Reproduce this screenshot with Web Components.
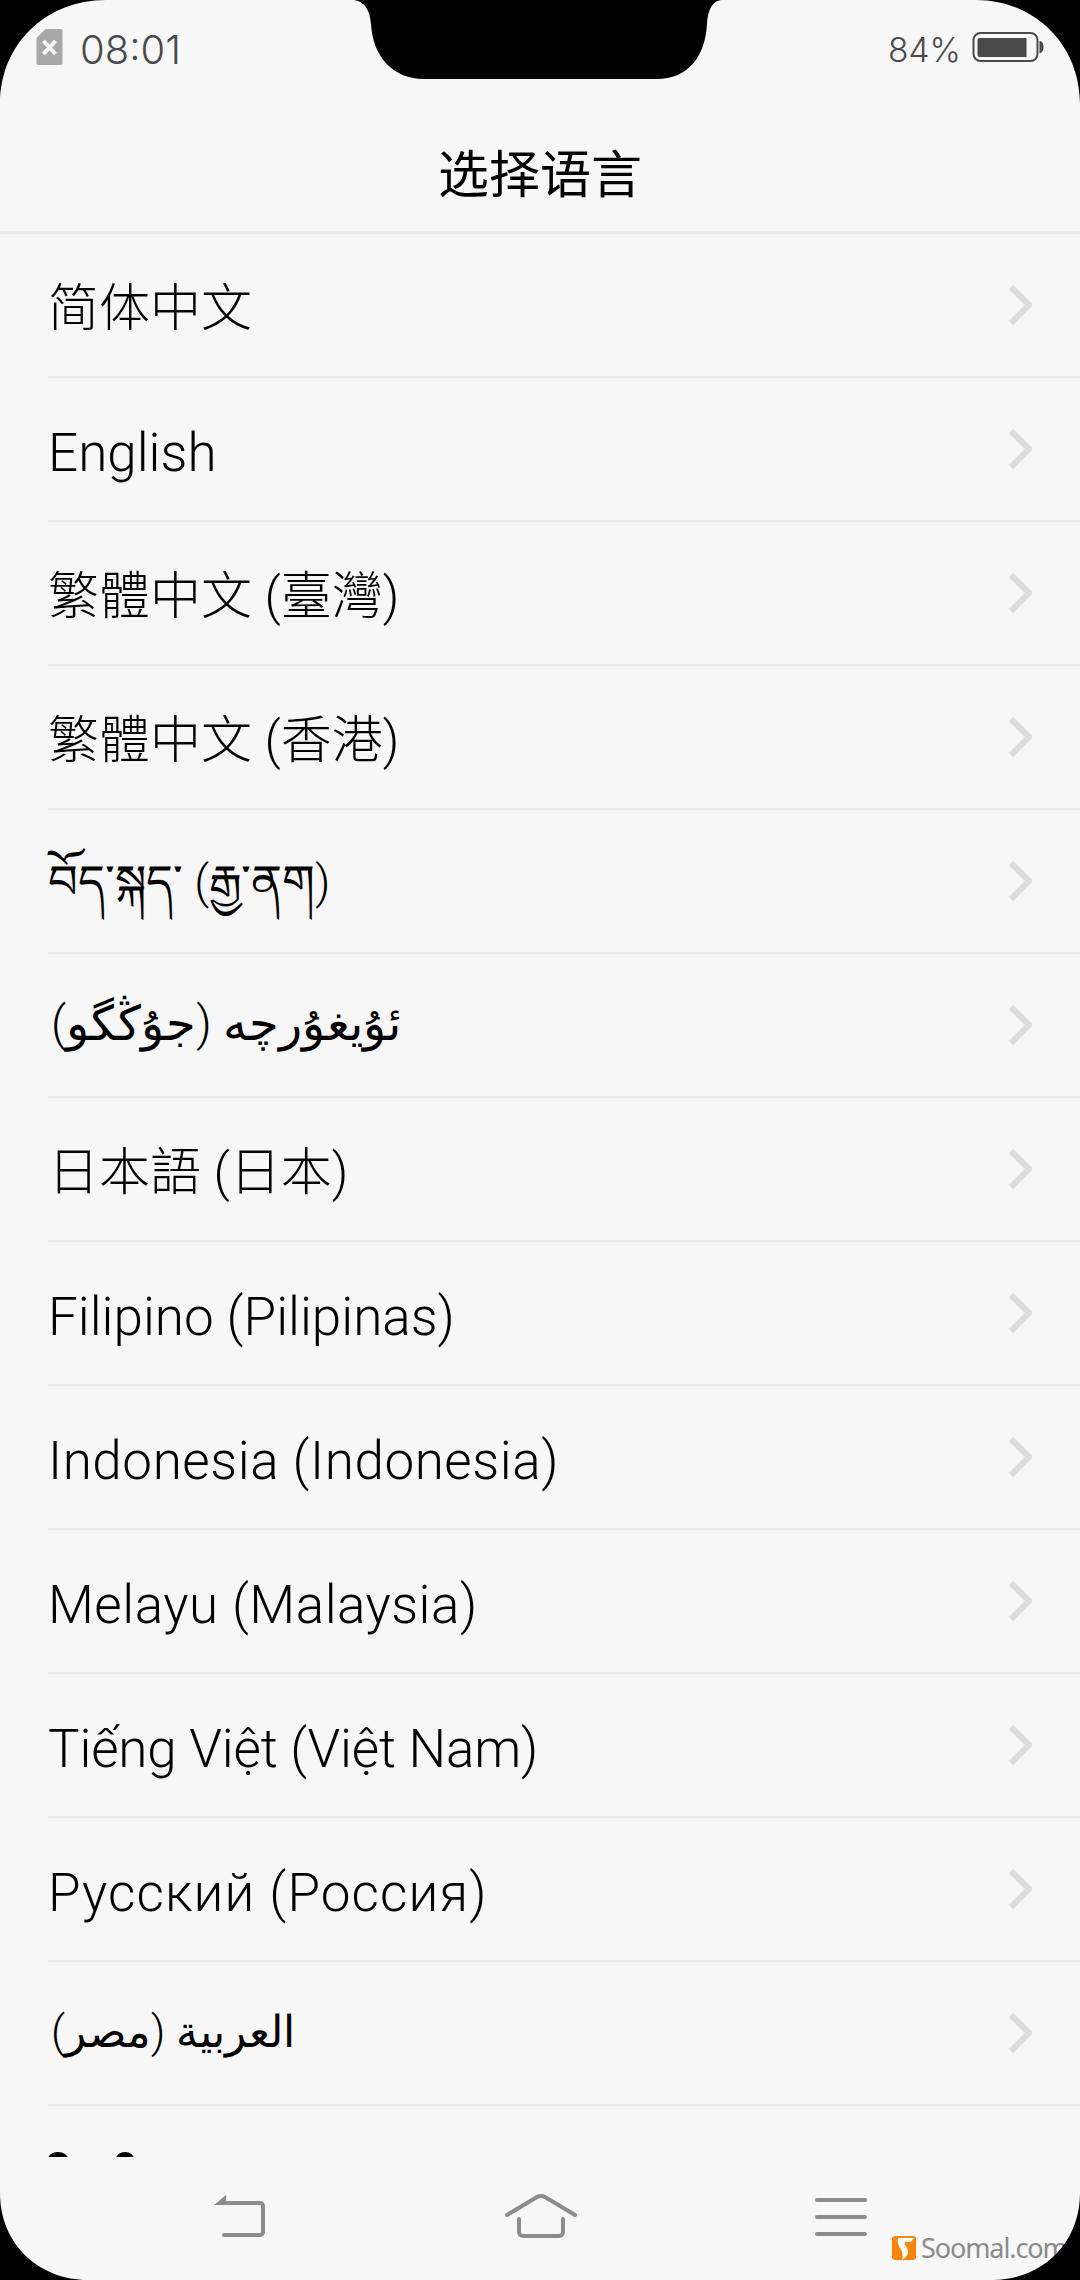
<!DOCTYPE html>
<html lang="zh"><head><meta charset="utf-8"><title>选择语言</title>
<style>
html,body{margin:0;padding:0;background:#f7f7f7}
body{width:1080px;height:2280px;overflow:hidden;font-family:Roboto,"Noto Sans CJK SC",sans-serif}
</style></head><body>
<phone-screen>
  <status-bar slot="top" time="08:01" battery="84%"></status-bar>
  <page-title slot="top">选择语言</page-title>
  <lang-row kind="cjk">简体中文</lang-row>
  <lang-row>English</lang-row>
  <lang-row kind="tc">繁體中文 (臺灣)</lang-row>
  <lang-row kind="tc">繁體中文 (香港)</lang-row>
  <lang-row kind="tib">བོད་སྐད་ (རྒྱ་ནག)</lang-row>
  <lang-row kind="rtl" style="--rtl-size:47.5px">ئۇيغۇرچە (جۇڭگو)</lang-row>
  <lang-row kind="jp">日本語 (日本)</lang-row>
  <lang-row>Filipino (Pilipinas)</lang-row>
  <lang-row style="letter-spacing:.55px">Indonesia (Indonesia)</lang-row>
  <lang-row style="letter-spacing:.5px">Melayu (Malaysia)</lang-row>
  <lang-row style="letter-spacing:-.2px">Tiếng Việt (Việt Nam)</lang-row>
  <lang-row style="letter-spacing:1.1px">Русский (Россия)</lang-row>
  <lang-row kind="rtl" style="--rtl-size:44px">العربية (مصر)</lang-row>
  <clipped-row></clipped-row>
  <nav-bar slot="bottom"></nav-bar>
</phone-screen>
<script>
function def(name, html, init){
  customElements.define(name, class extends HTMLElement{
    constructor(){super();this.attachShadow({mode:'open'}).innerHTML=html;}
    connectedCallback(){ if(init) init(this); }
  });
}
def('phone-screen',`<style>
:host{display:flex;flex-direction:column;position:relative;width:1080px;height:2280px;background:#f7f7f7;overflow:hidden}
.list{flex:1;min-height:0;overflow:hidden;display:flex;flex-direction:column}
svg{position:absolute;left:0;top:0;pointer-events:none}
</style>
<slot name="top"></slot><div class="list"><slot></slot></div><slot name="bottom"></slot>
<svg width="1080" height="2280" viewBox="0 0 1080 2280"><path fill="#000" fill-rule="evenodd" d="M0 0H1080V2280H0Z
M106 0H352C364 0 370 10 371 24C373 58 394 79 424 79H657C687 79 705 58 707 24C708 10 712 0 723 0H976C1035 0 1080 45 1080 104V2193C1080 2245 1040 2280 993 2280H88C40 2280 0 2245 0 2193V104C0 45 45 0 106 0Z"/></svg>`);
def('status-bar',`<style>
:host{display:flex;align-items:center;height:94px;box-sizing:border-box;padding:0 36px 0 36px;color:#4a4a4a;font-family:Inter,sans-serif;font-weight:300}
.t{font-size:40px;margin-left:17px;flex:1;line-height:50px;padding-top:5px}
.b{font-size:33.5px;margin-right:11px;line-height:50px;padding-top:5px}
svg{display:block}
</style>
<svg width="27" height="36" viewBox="0 0 26 36"><path fill="#a8a8a8" d="M9 0H24a2 2 0 0 1 2 2V34a2 2 0 0 1-2 2H2a2 2 0 0 1-2-2V9Z"/><path stroke="#f7f7f7" stroke-width="4" d="M7 12 19 25M19 12 7 25"/></svg>
<span class="t" id="t"></span><span class="b" id="b"></span>
<svg width="72" height="30" viewBox="0 0 71 30"><rect x="1" y="1" width="64" height="28" rx="7" fill="none" stroke="#4a4a4a" stroke-width="2"/><path fill="#4a4a4a" d="M7 6H54V25H7a2 2 0 0 1-2-2V8a2 2 0 0 1 2-2Z"/><path fill="#4a4a4a" d="M67 9c2 0 4 2 4 6s-2 6-4 6Z"/></svg>`,
el=>{el.shadowRoot.getElementById('t').textContent=el.getAttribute('time');el.shadowRoot.getElementById('b').textContent=el.getAttribute('battery');});
def('page-title',`<style>
:host{display:flex;align-items:center;justify-content:center;height:140px;box-sizing:border-box;border-bottom:3px solid #ececec;padding-top:16px;font:400 51px "Noto Sans CJK SC",sans-serif;color:#000}
</style><slot></slot>`);
def('lang-row',`<style>
:host{display:flex;flex:none;align-items:center;justify-content:space-between;height:144px;box-sizing:border-box;margin-left:48px;padding:0 48px 0 0;border-bottom:2px solid #ececec;color:#000;font:300 53px/70px Roboto,"Noto Sans CJK SC","DejaVu Sans",sans-serif}
:host([kind="cjk"]){font-size:51px}
:host([kind="tc"]){font:300 51px/70px Roboto,"Noto Sans CJK TC",sans-serif}
:host([kind="jp"]){font:300 51px/70px Roboto,"Noto Sans CJK JP",sans-serif}
:host([kind="tib"]){font-size:46.5px}
:host([kind="rtl"]) .l{direction:rtl;unicode-bidi:isolate;font:300 var(--rtl-size,46px)/70px Roboto,sans-serif;padding:0 0 0 3px;margin-top:-2px}
:host([kind="tib"]) .l{padding-top:2px}
svg{display:block;flex:none}
.l{display:block;padding-top:8px}
</style><span class="l"><slot></slot></span>
<svg width="24" height="40" viewBox="0 0 24 40"><path d="M3 2 21 20 3 38" fill="none" stroke="#dcdcdc" stroke-width="6"/></svg>`);
def('clipped-row',`<style>
:host{display:flex;flex:none;gap:48px;margin-left:48px;padding-top:46px;height:60px}
i{display:block;width:20px;height:14px;border-radius:50%;background:#000}
i+i{width:18px}
</style><i></i><i></i>`);
def('nav-bar',`<style>
:host{display:block;position:relative;height:123px;flex:none;background:#f7f7f7;z-index:0}
svg{position:absolute;fill:none;stroke:#8c8c8c;stroke-width:4;stroke-linecap:round;stroke-linejoin:round}
.logo{position:absolute;left:892px;top:79px;display:flex;align-items:center;gap:5px;color:#8a8a8a;font:27px "Noto Sans",sans-serif;letter-spacing:-1.1px;line-height:24px}
.logo svg{position:static;stroke:none}
</style>
<svg style="left:212px;top:37px" width="54" height="44" viewBox="0 0 54 44"><path d="M10 9H48a3 3 0 0 1 3 3V38a3 3 0 0 1-3 3H12"/><path fill="#8c8c8c" stroke="none" d="M14 1V11H2Z"/></svg>
<svg style="left:504px;top:36px" width="74" height="46" viewBox="0 0 74 46"><path d="M3 22 33 4Q37 2 41 4L71 22"/><path d="M15 26V39a4 4 0 0 0 4 4H55a4 4 0 0 0 4-4V26"/></svg>
<svg style="left:814px;top:41px" width="54" height="40" viewBox="0 0 54 40"><path d="M3 2H51M3 19H51M3 36H51"/></svg>
<div class="logo"><svg width="24" height="24" viewBox="0 0 24 24"><rect width="24" height="24" rx="3" fill="#f98406"/><path fill="#fff" d="M6 2H22L19 6H13C11 8 17 12 16 17 15 20 13 22 10 24 11 20 11 16 8 12 6 9 5 5 6 2Z"/></svg><span>Soomal.com</span></div>`);
</script></body></html>
